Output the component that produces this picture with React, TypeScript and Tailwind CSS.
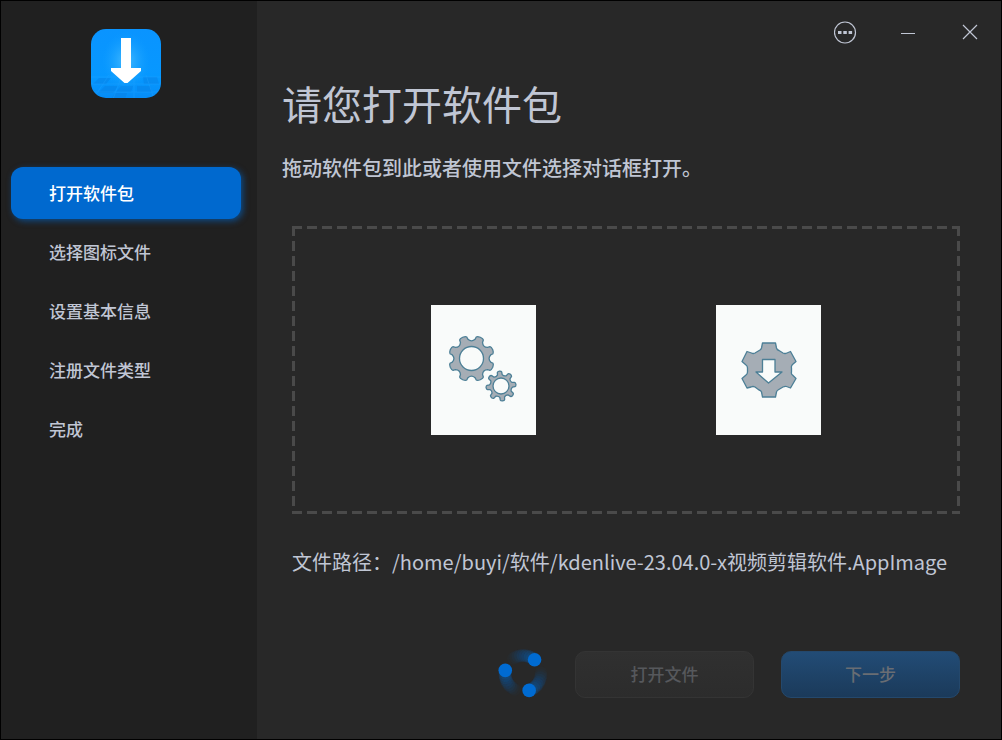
import React from "react";

const steps = ["打开软件包", "选择图标文件", "设置基本信息", "注册文件类型", "完成"];

function polar(cx: number, cy: number, r: number, deg: number) {
  const a = (deg * Math.PI) / 180;
  return `${(cx + r * Math.cos(a)).toFixed(2)} ${(cy + r * Math.sin(a)).toFixed(2)}`;
}

/** Outline of a cog: flat-topped teeth joined by rounded valleys. */
function gearPath(
  cx: number,
  cy: number,
  outer: number,
  root: number,
  teeth: number,
  start: number,
  tip: number,
  base: number,
  valley: number,
) {
  const step = 360 / teeth;
  let d = "";
  for (let i = 0; i < teeth; i++) {
    const a = start + i * step;
    d += `${i === 0 ? "M" : "L"}${polar(cx, cy, outer - 1, a - tip)}`;
    d += `Q${polar(cx, cy, outer, a - tip * 0.8)} ${polar(cx, cy, outer, a)}`;
    d += `Q${polar(cx, cy, outer, a + tip * 0.8)} ${polar(cx, cy, outer - 1, a + tip)}`;
    d += `L${polar(cx, cy, root, a + base)}`;
    d += `Q${polar(cx, cy, valley, a + step / 2)} ${polar(cx, cy, root, a + step - base)}`;
  }
  return d + "Z";
}

function ring(cx: number, cy: number, r: number) {
  return `M${cx - r} ${cy}a${r} ${r} 0 1 0 ${2 * r} 0a${r} ${r} 0 1 0 ${-2 * r} 0Z`;
}

function Logo() {
  return (
    <svg viewBox="0 0 70 70" className="size-[70px]" aria-hidden="true">
      <defs>
        <linearGradient id="logo-bg" x1="0" y1="0" x2="0" y2="1">
          <stop offset="0" stopColor="#0a94ff" />
          <stop offset="0.7" stopColor="#0798ff" />
          <stop offset="1" stopColor="#078df6" />
        </linearGradient>
        <radialGradient id="logo-glow">
          <stop offset="0" stopColor="#4fc0ff" stopOpacity="0.9" />
          <stop offset="1" stopColor="#12a0ff" stopOpacity="0" />
        </radialGradient>
        <clipPath id="logo-clip">
          <rect width="70" height="69" rx="15" />
        </clipPath>
      </defs>
      <g clipPath="url(#logo-clip)">
        <rect width="70" height="69" fill="url(#logo-bg)" />
        <path
          d="M8 49h12l-5 6H2zM52 48h14l2 7H53zM14 57h13l-5 7H7zM30 57h12l-2 6H25zM46 57h13l2 6H46zM24 64h12l-2 6H20z"
          fill="#087ee0"
          opacity="0.4"
        />
        <path
          d="M0 48h70M0 55h70M0 63h70M18 46L2 70M31 46L22 70M43 46v24M55 46l8 24"
          stroke="#25a3ff"
          opacity="0.35"
        />
        <ellipse cx="35" cy="32" rx="24" ry="29" fill="url(#logo-glow)" />
        <path d="M30 9h10v30h10v3L36.500 54h-3L20 42v-3h10z" fill="#fff" />
      </g>
    </svg>
  );
}

function GearsPage() {
  return (
    <svg viewBox="0 0 105 130" className="h-[130px] w-[105px] bg-[#f9fbfa]" role="img" aria-label="AppImage">
      <g fill="#a5adb5" stroke="#4c7f96" strokeWidth="1.3" strokeLinejoin="round" fillRule="evenodd">
        <path d={gearPath(40.5, 53.5, 23, 19.5, 8, 22.5, 10, 12, 16) + ring(40.5, 53.5, 12)} />
        <path d={gearPath(70, 81, 15, 11.5, 8, -6, 9, 12, 10) + ring(70, 81, 8)} />
      </g>
    </svg>
  );
}

function InstallPage() {
  return (
    <svg viewBox="0 0 105 130" className="h-[130px] w-[105px] bg-[#f9fbfa]" role="img" aria-label="安装包">
      <g stroke="#4c7f96" strokeWidth="1.3" strokeLinejoin="round">
        <path
          fill="#a5adb5"
          d="M46.500 38H59.500L60.500 43Q61 45 63 45.500L67 48Q69 49 71 48L74.500 46.500L80 56.500L76.500 59.500Q75 61 75.500 63V67Q75 69 76.500 70L80 73.500L74.500 83L70.500 81.500Q69 81 67 82L62 85Q61 85.500 60.500 87L59.500 92H46.500L45.500 87Q45 85.500 43 85L39 82Q37 81 35 82L31 83L26 73.500L30 70Q31.500 69 31.500 67V63Q31.500 61 30 60L26 56.500L31 46.500L35.500 48Q37 49 39 48L44 45Q45 44.500 45.500 43Z"
        />
        <path fill="#f9fbfa" d="M46.500 54.500H59V67H66L52.500 78L40 67H46.500Z" />
      </g>
    </svg>
  );
}

const tail = [9, 8, 7, 6, 5, 4, 3, 2, 1];

function Spinner() {
  return (
    <svg viewBox="0 0 50 50" className="size-[50px]" role="status" aria-label="加载中">
      <g fill="#006bd2">
        {[-50, 70, 190].map((head) => (
          <g key={head}>
            {tail.map((n) => (
              <circle
                key={n}
                cx={25 + 18 * Math.cos(((head - n * 8) * Math.PI) / 180)}
                cy={24.5 + 18 * Math.sin(((head - n * 8) * Math.PI) / 180)}
                r="6.5"
                opacity={0.16 - n * 0.015}
              />
            ))}
            <circle
              cx={25 + 18 * Math.cos((head * Math.PI) / 180)}
              cy={24.5 + 18 * Math.sin((head * Math.PI) / 180)}
              r="6.8"
            />
          </g>
        ))}
      </g>
    </svg>
  );
}

function TitleBar() {
  const button = "flex h-[62px] w-[62px] items-center justify-center";
  return (
    <header className="flex justify-end text-[#c0c6d4]">
      <button type="button" aria-label="菜单" className={button}>
        <svg viewBox="0 0 24 24" className="size-6" fill="none" stroke="currentColor">
          <circle cx="11" cy="12.5" r="10.5" strokeWidth="1.2" />
          <path d="M4 11h3.500v3H4zM9.300 11h3.500v3H9.300zM14.600 11h3.500v3h-3.500z" fill="currentColor" stroke="none" />
        </svg>
      </button>
      <button type="button" aria-label="最小化" className={button}>
        <svg viewBox="0 0 24 24" className="size-6" stroke="currentColor">
          <path d="M5 13.500h14" />
        </svg>
      </button>
      <button type="button" aria-label="关闭" className={button}>
        <svg viewBox="0 0 24 24" className="size-6" stroke="currentColor">
          <path d="M5 5l14 14M19 5L5 19" strokeWidth="1.2" />
        </svg>
      </button>
    </header>
  );
}

export default function App() {
  return (
    <div className="flex min-h-screen border border-black bg-[#282828] font-['Noto_Sans_CJK_SC',sans-serif] text-[#c0c6d4]">
      <aside className="flex w-64 shrink-0 flex-col bg-[#202020] pr-4 pl-[10px]">
        <div className="flex justify-center pt-7 pb-[68px]">
          <Logo />
        </div>
        <nav className="flex flex-col gap-[7px]">
          {steps.map((step, i) => (
            <button
              key={step}
              type="button"
              aria-current={i === 0 ? "step" : undefined}
              className={
                i === 0
                  ? "h-[52px] rounded-xl bg-[#0069cf] pl-[38px] text-left text-[17px] font-medium text-white shadow-[2px_2px_6px_#0069cf99]"
                  : "h-[52px] rounded-xl pl-[38px] text-left text-[17px] font-medium"
              }
            >
              {step}
            </button>
          ))}
        </nav>
      </aside>

      <main className="flex min-w-0 flex-1 flex-col">
        <TitleBar />
        <div className="flex flex-1 flex-col pr-[41px] pb-10 pl-[25px]">
          <h1 className="pt-3 text-[40px] leading-[56px]">请您打开软件包</h1>
          <p className="pt-[23px] text-[20px] leading-7 font-medium">拖动软件包到此或者使用文件选择对话框打开。</p>

          <section className="flex flex-1 flex-col pt-11 pl-[10px]">
            <div className="flex flex-1 items-center justify-center gap-[180px] bg-[image:repeating-linear-gradient(90deg,#4a4a4a_0_10px,transparent_10px_15px),repeating-linear-gradient(90deg,#4a4a4a_0_10px,transparent_10px_15px),repeating-linear-gradient(180deg,#4a4a4a_0_10px,transparent_10px_15px),repeating-linear-gradient(180deg,#4a4a4a_0_10px,transparent_10px_15px)] bg-[length:100%_3px,100%_3px,3px_100%,3px_100%] bg-[position:left_top,left_bottom,left_top,right_top] bg-no-repeat">
              <GearsPage />
              <InstallPage />
            </div>
            <p className="pt-[34px] text-[20px] leading-7">
              文件路径：/home/buyi/软件/kdenlive-23.04.0-x视频剪辑软件.AppImage
            </p>
          </section>

          <footer className="flex items-center justify-end pt-[73px]">
            <Spinner />
            <button
              type="button"
              disabled
              className="ml-[27px] h-[47px] w-[179px] rounded-[10px] border border-[#343434] bg-linear-to-b from-[#303030] to-[#2c2c2c] text-[17px] font-medium text-[#56585c]"
            >
              打开文件
            </button>
            <button
              type="button"
              disabled
              className="ml-[27px] h-[47px] w-[179px] rounded-[10px] border border-[#24486c] bg-linear-to-b from-[#224c76] to-[#1b3a5a] text-[17px] font-medium text-[#696d73]"
            >
              下一步
            </button>
          </footer>
        </div>
      </main>
    </div>
  );
}
